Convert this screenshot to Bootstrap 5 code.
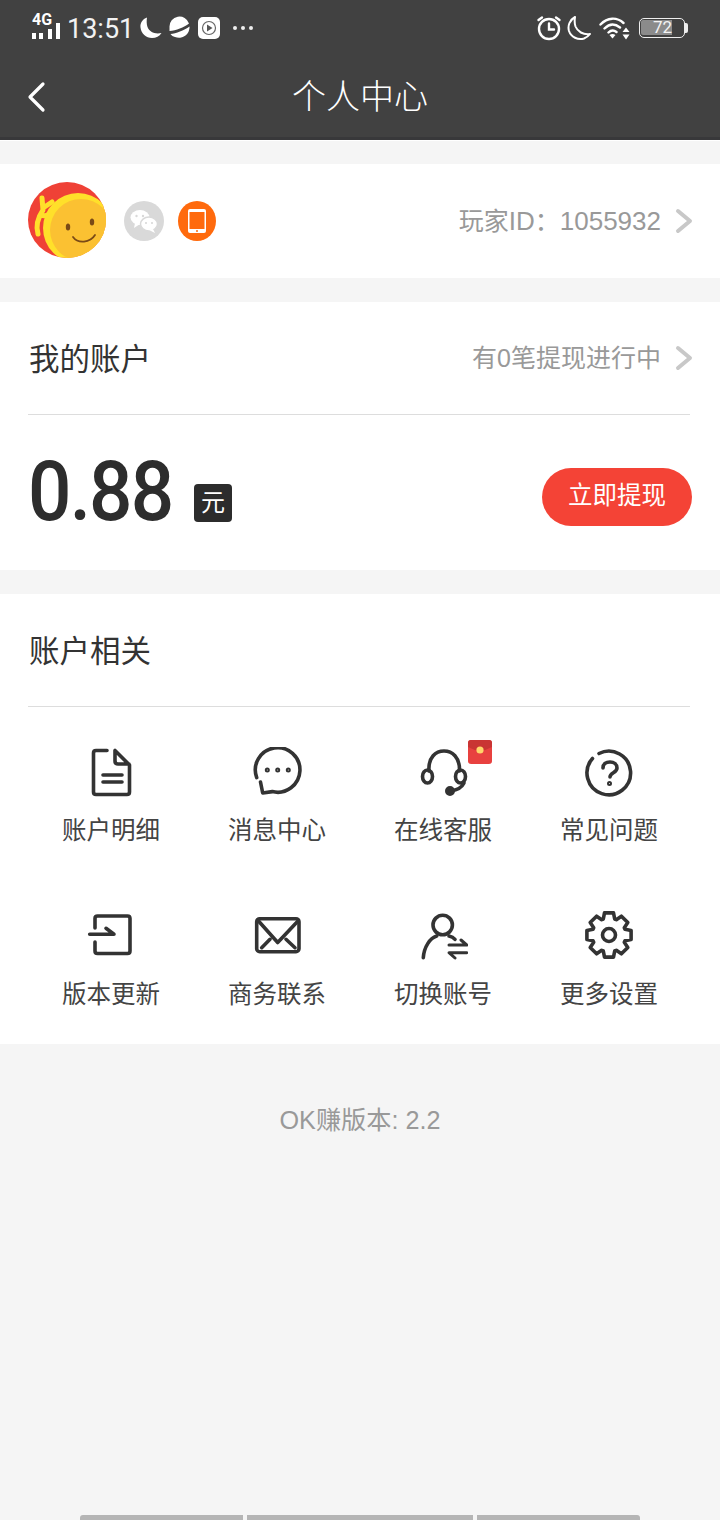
<!DOCTYPE html>
<html lang="zh-CN">
<head>
    <meta charset="UTF-8" />
    <meta name="viewport" content="width=device-width, initial-scale=1.0" />
    <title>个人中心</title>
    <link href="https://cdn.jsdelivr.net/npm/bootstrap@5.3.0/dist/css/bootstrap.min.css" rel="stylesheet">
    <style>
        body {
            font-family: Roboto, 'Noto Sans CJK SC', sans-serif;
            background-color: #f5f5f5;
            color: #333;
            width: 720px;
            height: 1520px;
            overflow: hidden;
        }
        .top-head {
            background: #414141;
            height: 140px;
            border-bottom: 3px solid #38383a;
            box-shadow: 0 1px 0 #fff;
            color: #fff;
        }
        .status-row { height: 56px; padding: 0 32px; }
        .status-time { font-size: 27px; line-height: 30px; margin: 2px 5px 0 6px; color: #f2f2f2; }
        .signal-box { width: 29px; height: 26px; position: relative; }
        .signal-4g { position: absolute; left: 0; top: -4px; font-size: 16px; line-height: 18px; font-weight: 700; }
        .batt-box {
            width: 46px; height: 20px;
            border: 1.5px solid #eee;
            border-radius: 5px;
            padding: 1px;
            position: relative;
        }
        .batt-fill {
            width: 31px; height: 15px;
            background: #8b8b8b;
            border-radius: 2px 0 0 2px;
            font-size: 17px; line-height: 15px;
            text-align: right;
            color: #f4f4f4;
        }
        .batt-nub { width: 3px; height: 10px; background: #eee; border-radius: 0 2px 2px 0; }
        .title-row { height: 81px; }
        .title-side { width: 88px; padding-left: 27px; }
        .title-text { font-size: 34px; line-height: 44px; color: #fff; font-weight: 300; }
        .white-block { background: #fff; padding: 0 28px; }
        .gap-first { margin-top: 24px; height: 114px; }
        .gap-next { margin-top: 24px; }
        .avatar-svg { display: block; margin-bottom: 2px; }
        .bind-gray { margin-left: 18px; }
        .bind-orange { margin-left: 14px; }
        .grey-note { color: #999; font-size: 25px; line-height: 34px; margin-right: -1px; }
        .grey-note .num-part { font-family: 'Liberation Sans', sans-serif; font-size: 26px; }
        .grey-note .zero-part { font-family: 'Liberation Sans', sans-serif; }
        .head-row { height: 113px; border-bottom: 1px solid #ddd; padding: 0 0 0 1px; margin-right: 2px; }
        .head-row .grey-note { margin-right: -3px; }
        .head-title { font-size: 30.5px; line-height: 40px; color: #333; margin: 0; padding-top: 4px; font-weight: 400; }
        .chev-ico { margin-left: 14px; }
        .money-row { height: 155px; }
        .money-num {
            font-size: 84px; line-height: 90px; font-weight: 500; color: #2d2d2d;
            width: 144px; white-space: nowrap; letter-spacing: -2px;
            margin-bottom: 2px;
            transform: scaleX(.91); transform-origin: left center;
        }
        .money-unit {
            width: 38px; height: 38px; background: #2c2c2c; color: #fff;
            border-radius: 4px; font-size: 24px; line-height: 38px; text-align: center;
            margin: 20px 0 0 22px;
        }
        .cash-btn {
            width: 150px; height: 58px; border-radius: 29px; border: 0;
            background: #f44336; color: #fff; font-size: 24.5px; padding: 0;
            margin-top: 8px;
        }
        .entry-grid { display: grid; grid-template-columns: repeat(4, 166px); row-gap: 63px; padding: 40px 0 32px; }
        .entry-icon { width: 50px; height: 50px; position: relative; display: block; }
        .entry-text { font-size: 24.5px; line-height: 34px; margin-top: 17px; color: #444; }
        .red-packet { position: absolute; left: 50px; top: -7px; }
        .ver-text { color: #999; font-size: 25.2px; line-height: 34px; padding-top: 59px; font-family: 'Liberation Sans', 'Noto Sans CJK SC', sans-serif; }
        .gesture-bar { height: 5px; padding: 0 80px; gap: 4px; }
        .gesture-bar div { background: #b5b5b5; }
        .line-ico { fill: none; stroke: #333; stroke-width: 3.6; stroke-linecap: round; stroke-linejoin: round; }
    </style>
</head>
<body class="d-flex flex-column">

    <header class="top-head flex-shrink-0">
        <div class="status-row d-flex align-items-center justify-content-between">
            <div class="d-flex align-items-center">
                <div class="signal-box">
                    <span class="signal-4g">4G</span>
                    <svg width="29" height="26" viewBox="0 0 29 26" fill="#fff">
                        <rect x="0" y="18" width="4" height="6"/><rect x="7" y="18" width="4" height="6"/><rect x="16" y="14" width="4" height="10"/><rect x="24" y="8" width="4" height="16"/>
                    </svg>
                </div>
                <span class="status-time">13:51</span>
                <svg width="24" height="24" viewBox="0 0 24 24" fill="#fff"><path d="M8 1.500C3.500 3 1 7 1.500 11.500C2.200 17.500 7 22 13 22C17 22 20.500 20.500 22.500 17C16 18.500 10.500 16 8.500 11C7.500 8 7.500 4.500 8 1.500Z"/></svg>
                <svg width="24" height="24" viewBox="0 0 24 24" class="ms-1" fill="#fff"><path d="M2.500 11A10 10 0 0 1 22 7.500C17 11.500 9 14.500 2.500 15Z"/><path d="M3.500 18C9 17.500 17 14.500 22.500 10.500A10.500 10.500 0 0 1 8 21C6 20.500 4.500 19.500 3.500 18Z"/></svg>
                <svg width="22" height="22" viewBox="0 0 22 22" style="margin-left:7px"><rect width="22" height="22" rx="5" fill="#fff"/><circle cx="11" cy="11" r="6.500" fill="none" stroke="#666" stroke-width="1.200"/><path d="M9 7.500L14.500 11L9 14.500Z" fill="#555"/></svg>
                <svg width="22" height="6" viewBox="0 0 22 6" fill="#eee" style="margin-left:12px"><circle cx="3" cy="3" r="2"/><circle cx="11" cy="3" r="2"/><circle cx="19" cy="3" r="2"/></svg>
            </div>
            <div class="d-flex align-items-center">
                <svg width="26" height="26" viewBox="0 0 26 26" fill="none" stroke="#fff" stroke-width="2.400" stroke-linecap="round"><circle cx="13" cy="14" r="10"/><path d="M13 8.500V14.500H18M2.500 5L6 2.500M23.500 5L20 2.500"/></svg>
                <svg width="26" height="26" viewBox="0 0 26 26" fill="none" stroke="#fff" stroke-width="2" stroke-linejoin="round" class="ms-1"><path d="M9 2C3.500 5 1.500 11 3 16C5 22 12 25.500 18 23.500C20.500 22.500 22.500 21 24 19C17 20 11.500 16.500 9.500 11.500C8.500 8.500 8.500 5 9 2Z"/></svg>
                <svg width="32" height="24" viewBox="0 0 32 24" fill="none" stroke="#fff" stroke-width="2.400" stroke-linecap="round" style="margin-left:7px"><path d="M1.500 8.500C8.500 1 18 1 24.500 7M5.500 12.500C10.500 7.500 16 7.500 21 11.500M9.500 16.500C12 14 15 14 17.500 16"/><path d="M13.500 22.500L10.500 19C12.500 17.500 14.500 17.500 16.500 19Z" fill="#fff" stroke="none"/><path d="M27 11.500L30.500 16H23.500ZM27 23.500L23.500 18.500H30.500Z" fill="#fff" stroke="none"/></svg>
                <div class="d-flex align-items-center" style="margin-left:8px">
                    <div class="batt-box"><div class="batt-fill">72</div></div>
                    <div class="batt-nub"></div>
                </div>
            </div>
        </div>
        <div class="title-row d-flex align-items-center">
            <div class="title-side">
                <svg width="20" height="32" viewBox="0 0 20 32" fill="none" stroke="#fff" stroke-width="3.200" stroke-linecap="round" stroke-linejoin="round" class="d-block"><path d="M16 3L3 16L16 29"/></svg>
            </div>
            <div class="flex-fill text-center title-text">个人中心</div>
            <div class="title-side"></div>
        </div>
    </header>

    <section class="white-block gap-first d-flex align-items-center flex-shrink-0">
        <svg class="avatar-svg" width="78" height="76" viewBox="0 0 78 76">
            <defs><clipPath id="avaClip"><ellipse cx="39" cy="38" rx="39" ry="38"/></clipPath></defs>
            <g clip-path="url(#avaClip)">
                <rect width="78" height="76" fill="#ef4136"/>
                <path d="M10 52C7 42 11 34 15 28L14 16M15 26L24 20M13 33C18 35 22 32 24 28" fill="none" stroke="#ffe02a" stroke-width="5" stroke-linecap="round" stroke-linejoin="round"/>
                <circle cx="50" cy="46" r="35" fill="#ffe02a"/>
                <circle cx="53" cy="48" r="31" fill="#fbc132"/>
                <ellipse cx="40" cy="45" rx="2.200" ry="3.500" fill="#7a4a16"/>
                <ellipse cx="64" cy="40" rx="2.200" ry="3.500" fill="#7a4a16"/>
                <path d="M45 55C50 62 62 61 67 53" fill="none" stroke="#7a4a16" stroke-width="1.800" stroke-linecap="round"/>
            </g>
        </svg>
        <svg class="bind-gray" width="40" height="40" viewBox="0 0 40 40">
            <circle cx="20" cy="20" r="20" fill="#d9d9d9"/>
            <ellipse cx="16" cy="16.500" rx="9.500" ry="7.500" fill="#fff"/>
            <path d="M11 22L10 27L16 23Z" fill="#fff"/>
            <ellipse cx="25" cy="23" rx="8.500" ry="7" fill="#fff" stroke="#d9d9d9" stroke-width="1.500"/>
            <path d="M29 28L31 32L25 29Z" fill="#fff"/>
            <circle cx="12.500" cy="15" r="1.200" fill="#d9d9d9"/><circle cx="19" cy="15" r="1.200" fill="#d9d9d9"/>
            <circle cx="22" cy="22" r="1.100" fill="#d9d9d9"/><circle cx="28" cy="22" r="1.100" fill="#d9d9d9"/>
        </svg>
        <svg class="bind-orange" width="38" height="40" viewBox="0 0 38 40">
            <ellipse cx="19" cy="20" rx="19" ry="20" fill="#ff6a0d"/>
            <rect x="10" y="8" width="18" height="24" rx="2" fill="#fff"/>
            <rect x="11.500" y="11" width="15" height="17" fill="#ff6a0d"/>
            <circle cx="19" cy="30" r="1" fill="#ff6a0d"/>
        </svg>
        <div class="ms-auto d-flex align-items-center grey-note">
            <span>玩家<span class="num-part">ID</span>：<span class="num-part">1055932</span></span>
            <svg class="chev-ico" width="18" height="26" viewBox="0 0 18 26" fill="none" stroke="#c8c8c8" stroke-width="4" stroke-linecap="round" stroke-linejoin="round"><path d="M3 3L15 13L3 23"/></svg>
        </div>
    </section>

    <section class="white-block gap-next flex-shrink-0">
        <div class="head-row d-flex align-items-center justify-content-between">
            <h2 class="head-title">我的账户</h2>
            <div class="d-flex align-items-center grey-note">
                <span>有<span class="zero-part">0</span>笔提现进行中</span>
                <svg class="chev-ico" width="18" height="26" viewBox="0 0 18 26" fill="none" stroke="#c8c8c8" stroke-width="4" stroke-linecap="round" stroke-linejoin="round"><path d="M3 3L15 13L3 23"/></svg>
            </div>
        </div>
        <div class="money-row d-flex align-items-center justify-content-between">
            <div class="d-flex align-items-center">
                <div class="money-num">0.88</div>
                <div class="money-unit">元</div>
            </div>
            <button type="button" class="btn cash-btn">立即提现</button>
        </div>
    </section>

    <section class="white-block gap-next flex-shrink-0">
        <div class="head-row d-flex align-items-center">
            <h2 class="head-title">账户相关</h2>
        </div>
        <div class="entry-grid">
            <div class="d-flex flex-column align-items-center">
                <span class="entry-icon"><svg width="50" height="50" viewBox="0 0 50 50" class="line-ico"><path d="M21 3.500H10Q7.500 3.500 7.500 6V45Q7.500 47.500 10 47.500H41Q43.500 47.500 43.500 45V18L29 3.500V14Q29 17 32 17H43"/><path d="M17 28H36M17 35H36"/></svg></span>
                <span class="entry-text">账户明细</span>
            </div>
            <div class="d-flex flex-column align-items-center">
                <span class="entry-icon"><svg width="50" height="50" viewBox="0 0 50 50" class="line-ico"><path d="M4.700 30.600A22.300 22.300 0 1 1 20.300 44.600L10.700 46L8.500 35"/><circle cx="15.300" cy="23" r="1" stroke-width="3"/><circle cx="25.700" cy="23" r="1" stroke-width="3"/><circle cx="36.300" cy="23" r="1" stroke-width="3"/></svg></span>
                <span class="entry-text">消息中心</span>
            </div>
            <div class="d-flex flex-column align-items-center">
                <span class="entry-icon"><svg width="50" height="50" viewBox="0 0 50 50" class="line-ico"><path d="M11 24C10 10 18 4 26 4C34 4 42 10 41.500 24"/><ellipse cx="9.500" cy="29.500" rx="5" ry="6.500"/><ellipse cx="42.500" cy="29.500" rx="5" ry="6.500"/><path d="M46 36C44 40 40 43 33 44"/><circle cx="32" cy="44" r="3.200" fill="#333"/></svg>
                    <svg class="red-packet" width="24" height="24" viewBox="0 0 24 24"><rect width="24" height="24" rx="3" fill="#e8413f"/><path d="M0 3Q0 0 3 0H21Q24 0 24 3V7Q12 14 0 7Z" fill="#c93533"/><circle cx="12" cy="10" r="3.600" fill="#ffd56a"/></svg></span>
                <span class="entry-text">在线客服</span>
            </div>
            <div class="d-flex flex-column align-items-center">
                <span class="entry-icon"><svg width="50" height="50" viewBox="0 0 50 50" class="line-ico"><path d="M15 6.500A21.800 21.800 0 1 1 8.500 11.500"/><path d="M19 21C19 17 22 15 26 15C30 15 33 17.500 33 21C33 26 26 25.500 26 30"/><circle cx="25.500" cy="36.500" r="1" stroke-width="3"/></svg></span>
                <span class="entry-text">常见问题</span>
            </div>
            <div class="d-flex flex-column align-items-center">
                <span class="entry-icon"><svg width="50" height="50" viewBox="0 0 50 50" class="line-ico"><path d="M9 17V7.500Q9 5 11.500 5H41.500Q44 5 44 7.500V40Q44 42.500 41.500 42.500H11.500Q9 42.500 9 40V31"/><path d="M3.700 23.300H28L20 17.300"/></svg></span>
                <span class="entry-text">版本更新</span>
            </div>
            <div class="d-flex flex-column align-items-center">
                <span class="entry-icon"><svg width="50" height="50" viewBox="0 0 50 50" class="line-ico"><rect x="4.700" y="7.700" width="42.300" height="33" rx="3"/><path d="M6.500 10L25.700 31.500L46 10M9.700 36.700L18 28.300M43 36.700L34 28.300"/></svg></span>
                <span class="entry-text">商务联系</span>
            </div>
            <div class="d-flex flex-column align-items-center">
                <span class="entry-icon"><svg width="50" height="50" viewBox="0 0 50 50" class="line-ico"><circle cx="24.700" cy="14" r="9.700"/><path d="M5.300 46.700C6 36 12 27 18.700 25M31 25C33.500 25.500 35.500 26.500 37 28.300"/><path d="M31 34H48.700L43 29M48.700 41.700H31L37 47" stroke-width="3"/></svg></span>
                <span class="entry-text">切换账号</span>
            </div>
            <div class="d-flex flex-column align-items-center">
                <span class="entry-icon"><svg width="50" height="50" viewBox="0 0 50 50" class="line-ico"><path id="gearPath" d=""/><circle cx="25" cy="24" r="6.500"/></svg></span>
                <span class="entry-text">更多设置</span>
            </div>
        </div>
    </section>

    <div class="ver-text text-center">OK赚版本: 2.2</div>

    <div class="gesture-bar d-flex mt-auto flex-shrink-0">
        <div style="width:163px;border-radius:3px 0 0 0"></div>
        <div style="width:226px"></div>
        <div style="width:163px;border-radius:0 3px 0 0"></div>
    </div>

    <script src="https://cdn.jsdelivr.net/npm/bootstrap@5.3.0/dist/js/bootstrap.bundle.min.js"></script>
    <script>
        // gear outline, 8 teeth
        let gearD = '';
        for (let i = 0; i < 8; i++) {
            const a = i * Math.PI / 4 - Math.PI / 2;
            const pts = [[17, -0.34], [22.5, -0.2], [22.5, 0.2], [17, 0.34]];
            pts.forEach(function (p) {
                const x = 25 + p[0] * Math.cos(a + p[1]);
                const y = 24 + p[0] * Math.sin(a + p[1]);
                gearD += (gearD ? 'L' : 'M') + x.toFixed(1) + ' ' + y.toFixed(1);
            });
        }
        document.getElementById('gearPath').setAttribute('d', gearD + 'Z');
    </script>
</body>
</html>
